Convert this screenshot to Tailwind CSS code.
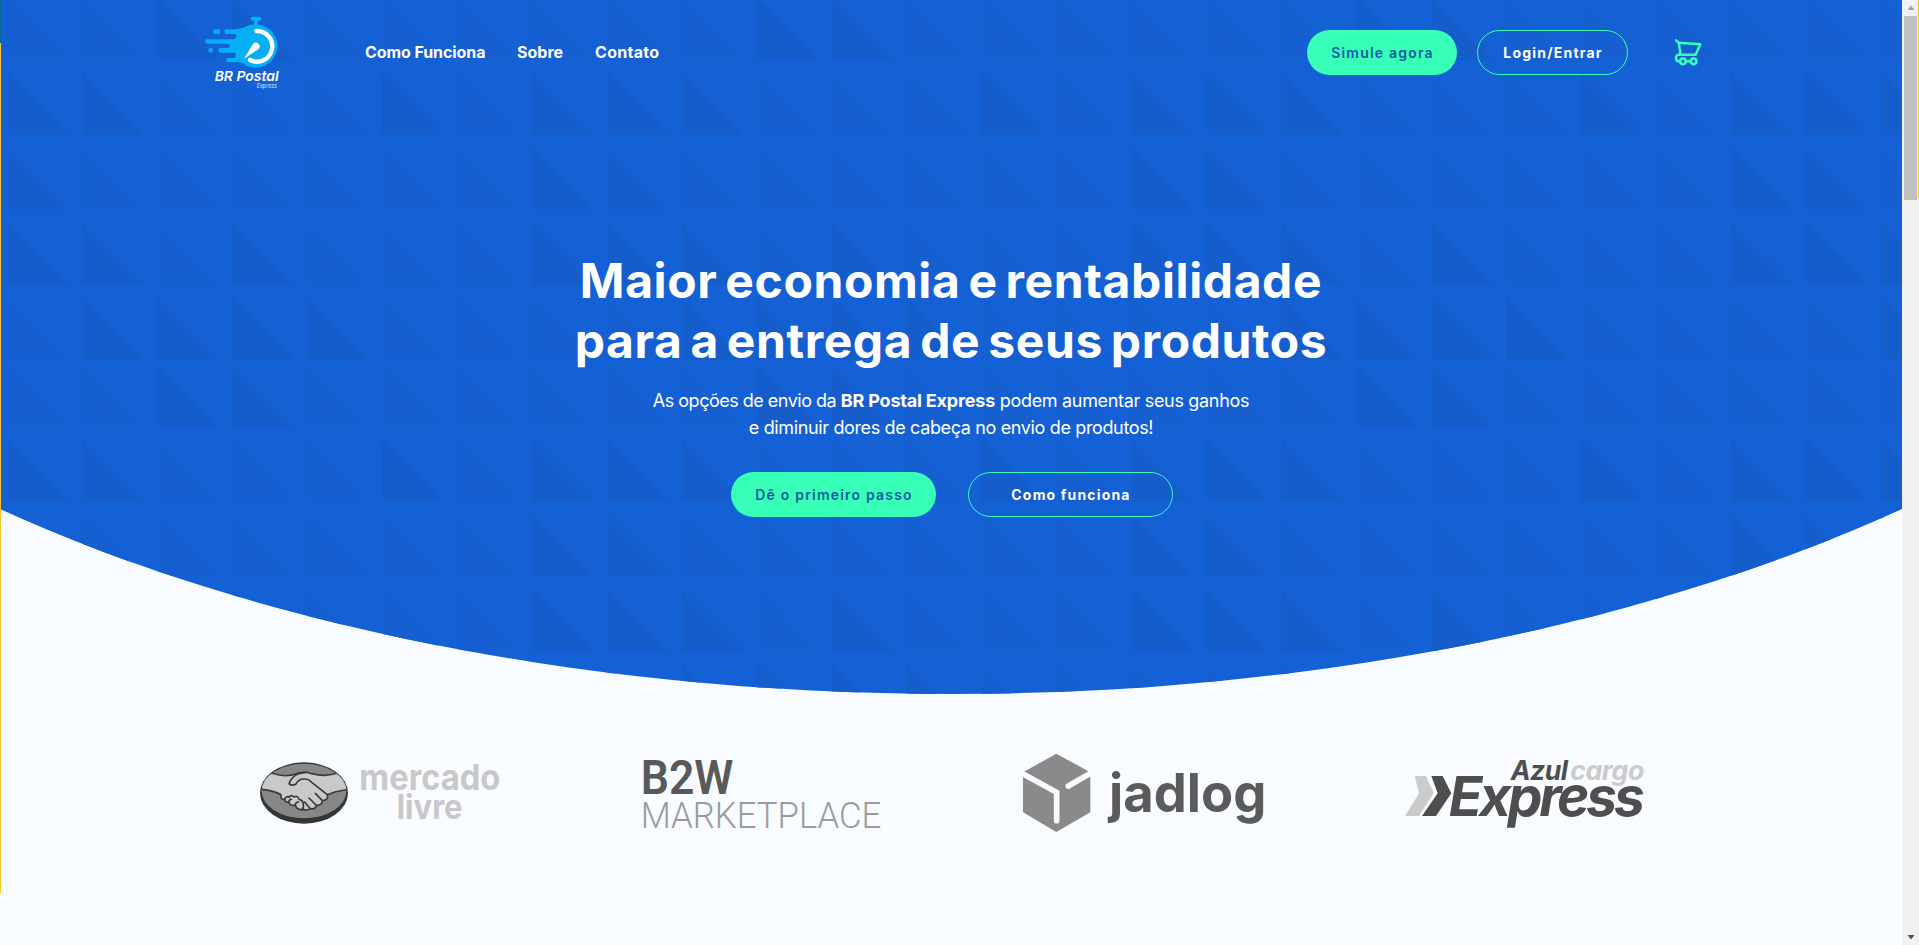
<!DOCTYPE html>
<html lang="pt-BR">
<head>
<meta charset="utf-8">
<title>BR Postal Express</title>
<script src="https://cdn.jsdelivr.net/npm/@tailwindcss/browser@4"></script>
</head>
<body class="h-[945px] w-[1919px] overflow-hidden bg-[#f8fbff] font-['Inter',sans-serif]">
<div class="flex h-full">
  <div class="relative h-full w-[1902px] overflow-hidden">
    <!-- patterned hero backdrop -->
    <div class="absolute inset-0 bg-[#1461d5] [clip-path:ellipse(1427px_727px_at_951px_-33px)]">
      <svg id="pattern" class="h-full w-full" viewBox="0 0 1902 945"></svg>
    </div>
    <div class="absolute left-0 top-0 z-10 h-[43px] w-px bg-[#0a6a96]"></div>
    <div class="absolute left-0 top-[43px] z-10 h-[850px] w-px bg-[#fbc437]"></div>

    <div class="relative flex h-full flex-col">
      <header class="flex h-[105px] items-center pl-[190px]">
        <svg class="h-[95px] w-[110px] shrink-0" viewBox="0 0 330 285">
          <g fill="#04aff5">
            <circle cx="197" cy="123" r="65"/>
            <rect x="182" y="35" width="31" height="12" rx="5"/>
            <rect x="192" y="40" width="11" height="24"/>
            <path d="M110 73H138Q165 68 178 60L200 120L178 185Q165 174 148 172H115a6.500 6.500 0 0 1 0-13H133Q138 158 138 151Q138 144 133 143H92a6.500 6.500 0 0 1 0-14H112Q120 128 120 122Q120 117 112 116H52a6.500 6.500 0 0 1 0-13H133Q141 102 141 95Q141 88 133 87H110a7 7 0 0 1 0-14Z"/>
            <rect x="69" y="73" width="22" height="14" rx="7"/>
            <rect x="55" y="129" width="14" height="14" rx="7"/>
          </g>
          <path d="M199 78A46 46 0 1 1 180 165" fill="none" stroke="#fff" stroke-width="13" stroke-linecap="round"/>
          <path d="M162 161L189 117A11 11 0 1 1 206 132Z" fill="#fff"/>
          <text x="74" y="229" font-size="41" font-weight="600" font-style="italic" fill="#fff" textLength="192" lengthAdjust="spacingAndGlyphs" font-family="Inter">BR Postal</text>
          <text x="200" y="248" font-size="18" font-style="italic" fill="#d5e3fa" textLength="61" lengthAdjust="spacingAndGlyphs" font-family="Inter">Express</text>
        </svg>
        <nav class="-mt-0.5 ml-[65px] flex gap-8 text-[16px] font-bold leading-6 text-white">
          <a class="w-[120px] whitespace-nowrap tracking-[-0.08px]">Como Funciona</a>
          <a class="w-[46px] whitespace-nowrap">Sobre</a>
          <a class="w-[65px] whitespace-nowrap tracking-[0.3px]">Contato</a>
        </nav>
        <a class="ml-[647px] flex h-[45px] w-[150px] shrink-0 items-center justify-center rounded-full bg-[#38ffb8] pl-px text-sm font-semibold tracking-[1.2px] text-[#135ba3]">Simule agora</a>
        <a class="ml-[20px] flex h-[45px] w-[151px] shrink-0 items-center justify-center rounded-full border border-[#38ffb8] pl-px text-sm font-bold tracking-[1.2px] text-white">Login/Entrar</a>
        <svg class="-mt-0.5 ml-[46px] h-7 w-7 shrink-0" viewBox="0 0 84 84" fill="none" stroke="#38ffb8" stroke-width="7.500" stroke-linecap="round" stroke-linejoin="round">
          <path d="M6 7L14 14L79 19L65 50H20L14 14M20 50H12Q6 52 6 61Q6 70 14 70H18M36 70H50"/>
          <circle cx="27" cy="70" r="8.500"/><circle cx="59" cy="70" r="8.500"/>
        </svg>
      </header>

      <section class="flex h-[589px] flex-col items-center pt-[146px] text-white">
        <h1 class="flex flex-col items-center text-[48px] font-bold leading-[60px] tracking-[0.6px] [word-spacing:-4px]">
          <span class="whitespace-nowrap">Maior economia e rentabilidade</span>
          <span class="whitespace-nowrap">para a entrega de seus produtos</span>
        </h1>
        <p class="mt-4 flex flex-col items-center text-[18px] leading-[27px]">
          <span class="whitespace-pre"><span class="tracking-[-0.5px]">As opções de envio da </span><b class="font-bold tracking-[-0.18px]">BR Postal Express</b><span class="tracking-[-0.32px]"> podem aumentar seus ganhos</span></span>
          <span class="whitespace-nowrap tracking-[-0.36px]">e diminuir dores de cabeça no envio de produtos!</span>
        </p>
        <div class="mt-[31px] flex gap-8 pl-0.5 text-sm">
          <a class="flex h-[45px] w-[205px] items-center justify-center rounded-full bg-[#38ffb8] pl-px font-semibold tracking-[1.2px] text-[#135ba3]">Dê o primeiro passo</a>
          <a class="flex h-[45px] w-[205px] items-center justify-center rounded-full border border-[#38ffb8] pl-px font-bold tracking-[1.17px]">Como funciona</a>
        </div>
      </section>

      <section class="flex pt-[46px]">
        <svg class="ml-[240px] h-[110px] w-[280px]" viewBox="0 0 840 330">
          <ellipse cx="192" cy="159" rx="132" ry="92" fill="#353535"/>
          <clipPath id="badge"><ellipse cx="192" cy="153" rx="127" ry="82"/></clipPath>
          <ellipse cx="192" cy="153" rx="127" ry="82" fill="#878787"/>
          <g clip-path="url(#badge)" stroke="#3a3a3a" stroke-width="5" stroke-linejoin="round" stroke-linecap="round" fill="#c9c9c9">
            <path d="M50 100H98Q130 112 160 104Q190 92 215 101Q255 112 290 100H340V150H315Q285 154 262 164Q266 180 248 182Q244 198 230 196Q226 210 210 206Q200 214 190 208Q172 212 166 196Q150 198 146 186Q134 188 134 178Q120 180 123 164Q100 150 50 146Z"/>
            <path d="M201 97Q172 98 160 111Q150 120 147 131Q154 139 168 132Q176 116 193 117Q206 116 216 128L262 164" />
            <path d="M247 182L226 160M229 196L207 174M211 206L194 186M134 178Q140 166 148 172Q152 162 162 171Q172 164 177 178Q190 180 190 194Q192 204 186 209M146 186Q148 178 154 178M166 196Q166 186 176 186" fill="none"/>
          </g>
          <text x="358" y="150" font-size="108" font-weight="700" fill="#c8c8c8" textLength="423" lengthAdjust="spacingAndGlyphs" font-family="Inter">mercado</text>
          <text x="470" y="237" font-size="102" font-weight="700" fill="#c8c8c8" textLength="198" lengthAdjust="spacingAndGlyphs" font-family="Inter">livre</text>
        </svg>
        <svg class="ml-[100px] h-[110px] w-[280px]" viewBox="0 0 840 330">
          <text x="62" y="162" font-size="144" font-weight="600" fill="#595959" textLength="278" lengthAdjust="spacingAndGlyphs" font-family="Roboto">B2W</text>
          <text x="62" y="264" font-size="110" font-weight="300" fill="#9b9b9b" textLength="722" lengthAdjust="spacingAndGlyphs" font-family="Roboto">MARKETPLACE</text>
        </svg>
        <svg class="ml-[100px] h-[110px] w-[280px]" viewBox="0 0 840 330">
          <path d="M169 41L271 97V217L169 276L69 217V97Z" fill="#8a8a8a"/>
          <path d="M60 97L170 157V242M205 138L280 95" fill="none" stroke="#f8fbff" stroke-width="17" stroke-linecap="round" stroke-linejoin="miter"/>
          <text x="327" y="216" font-size="160" font-weight="700" fill="#5b5b5b" textLength="472" lengthAdjust="spacingAndGlyphs" font-family="Inter">jadlog</text>
        </svg>
        <svg class="ml-[110px] h-[110px] w-[280px]" viewBox="0 0 840 330">
          <path d="M74 108H108L131 160L87 228H45L87 160Z" fill="#cbcbcb"/>
          <path d="M124 108H158L184 160L138 228H96L143 160Z" fill="#4e4e4e"/>
          <g font-family="Inter" font-style="italic" font-weight="700">
            <text x="362" y="121" font-size="80" fill="#4e4e4e" textLength="172" lengthAdjust="spacing">Azul</text>
            <text x="541" y="121" font-size="80" fill="#cbcbcb" textLength="222" lengthAdjust="spacing">cargo</text>
            <text x="176" y="228" font-size="165" fill="#4e4e4e" textLength="588" lengthAdjust="spacing">Express</text>
          </g>
        </svg>
      </section>
    </div>
  </div>

  <!-- scrollbar -->
  <div class="relative flex h-full w-[17px] flex-col items-center justify-between bg-[#f1f1f1]">
    <div class="absolute right-0 top-0 h-[198px] w-px bg-[#fbc437]"></div>
    <div class="flex flex-col items-center">
      <svg class="h-4 w-4" viewBox="0 0 16 16"><path d="M8 5.500L11.500 10H4.500Z" fill="#a3a3a3"/></svg>
      <div class="h-[184px] w-[13px] bg-[#c1c1c1]"></div>
    </div>
    <svg class="h-4 w-4" viewBox="0 0 16 16"><path d="M4.500 6H11.500L8 10.500Z" fill="#505050"/></svg>
  </div>
</div>
<script>
  // columns (of 16) that hold a strong triangle, for each row of the tile
  const dark = [[2,3,10,11],[0,1,5,7,8,9,13,15],[0,7,8,15],[0,1,3,7,8,9,11,15],[1,2,3,4,9,10,11,12]];
  let out = '';
  for (let r = 0; r < 10; r++) {
    const bottom = 59.5 + Math.floor(r / 5) * 366.7 + (r % 5) * 75;
    for (let c = 0; c < 26; c++) {
      const x = 7.3 + c * 74.94;
      const on = dark[r % 5].includes(c % 16);
      out += `<path d="M${x} ${bottom - 62}V${bottom}H${x + 62}Z" fill="${on ? '#155dca' : '#155fd1'}"/>`;
    }
  }
  document.getElementById('pattern').innerHTML = out;
</script>
</body>
</html>
